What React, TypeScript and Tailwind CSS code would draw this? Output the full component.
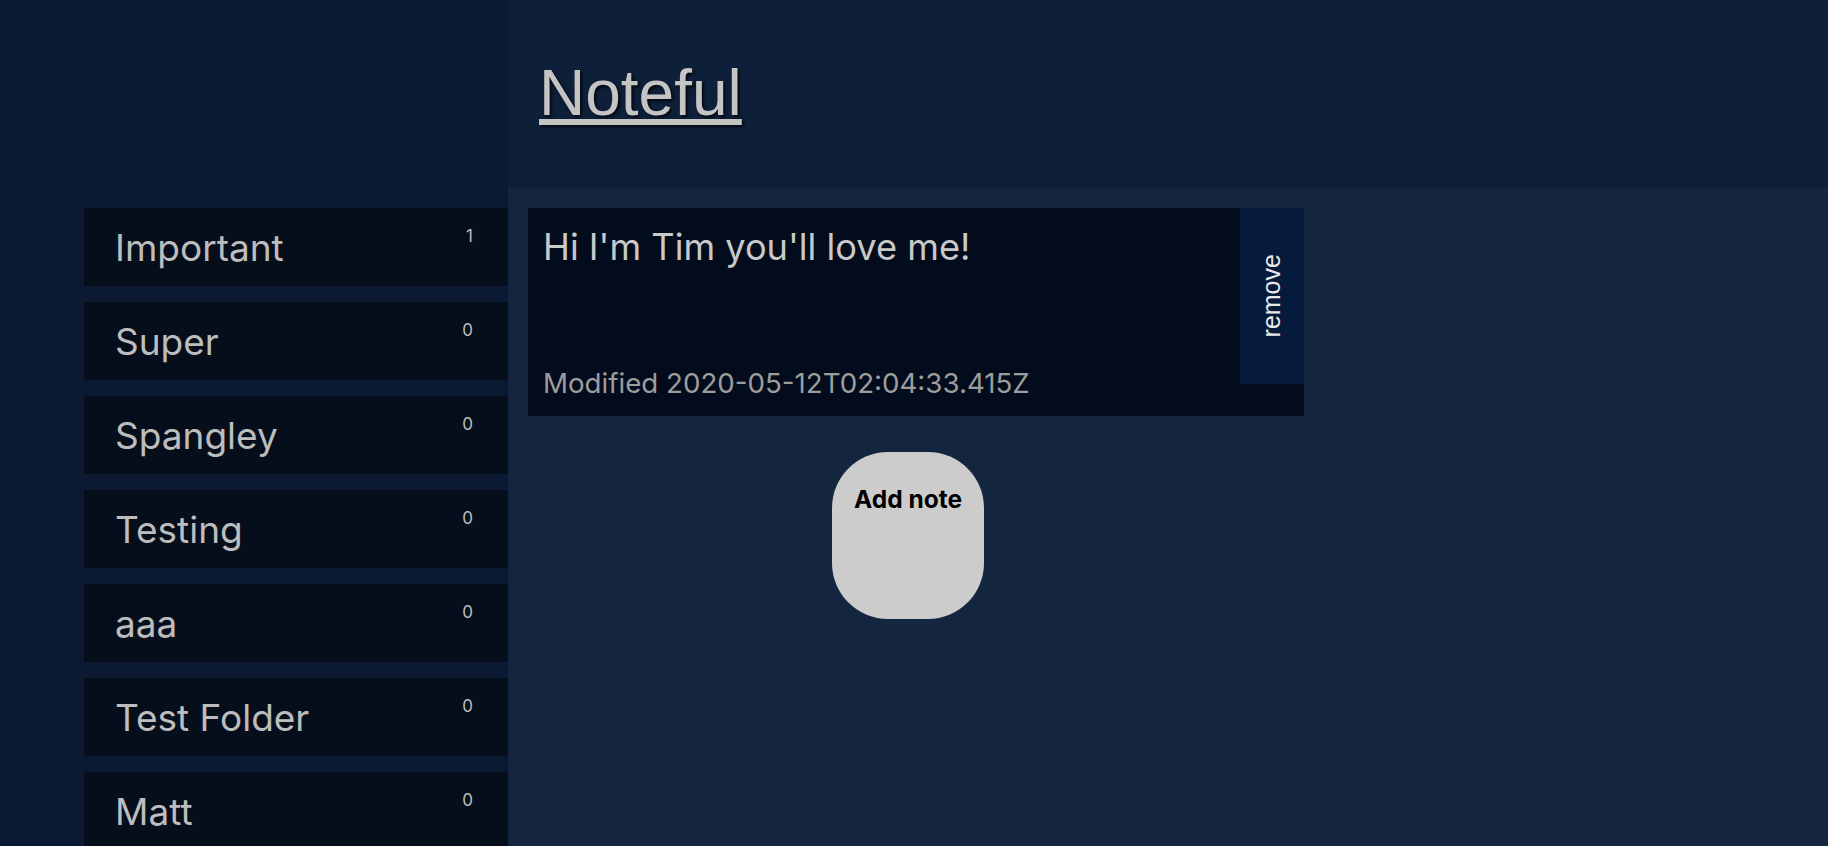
const folders = [
  { name: "Important", count: 1 },
  { name: "Super", count: 0 },
  { name: "Spangley", count: 0 },
  { name: "Testing", count: 0 },
  { name: "aaa", count: 0 },
  { name: "Test Folder", count: 0 },
  { name: "Matt", count: 0 },
];

function Sidebar() {
  return (
    <aside className="w-[508px] shrink-0 bg-[#0b1a32]">
      <div className="h-[188px]" />
      <ul className="flex flex-col gap-4 pl-[84px] pt-5">
        {folders.map((folder) => (
          <li
            key={folder.name}
            className="flex h-[78px] items-start justify-between bg-[#060e1c] pl-[31px] pr-[35px] pt-[18px] font-['Inter',sans-serif]"
          >
            <span className="text-[37px] leading-[1.21] text-[#bdbdbd]">{folder.name}</span>
            <span className="text-[17px] leading-[1.21] text-[#bdbdbd]">{folder.count}</span>
          </li>
        ))}
      </ul>
    </aside>
  );
}

function NoteCard() {
  return (
    <div className="flex h-[208px] w-[776px] bg-[#030c1d]">
      <div className="flex flex-1 flex-col justify-between pb-[15px] pl-[15px] pr-[14px] pt-[18px] font-['Inter',sans-serif]">
        <h2 className="text-[36.2px] leading-[1.21] text-[#c9c9c9]">Hi I'm Tim you'll love me!</h2>
        <p className="text-[27.7px] leading-[1.21] text-[#9d9d9d]">Modified 2020-05-12T02:04:33.415Z</p>
      </div>
      <button className="flex h-[176px] w-[64px] shrink-0 items-center justify-center bg-[#061a3b]">
        <span className="-rotate-90 whitespace-nowrap font-['Liberation_Sans',Arial,sans-serif] text-[25px] text-[#e8e8e8]">
          remove
        </span>
      </button>
    </div>
  );
}

export default function App() {
  return (
    <div className="flex h-[846px] overflow-hidden bg-[#14253f]">
      <Sidebar />
      <div className="flex flex-1 flex-col">
        <header className="flex h-[188px] shrink-0 items-center bg-[#0e1f39] pl-[31px]">
          <h1 className="font-['Liberation_Sans',Arial,sans-serif] text-[64px] leading-[1.15] text-[#c4c4c4] [text-shadow:2px_2px_3px_rgba(0,0,0,0.75)]">
            <a href="#" className="underline">
              Noteful
            </a>
          </h1>
        </header>
        <main className="flex flex-col items-start px-5 pt-5">
          <NoteCard />
          <button className="ml-[304px] mt-9 flex h-[167px] w-[152px] justify-center rounded-[56px] bg-[#cccccc] pt-[33px] font-['Inter',sans-serif] text-[24.5px] font-bold leading-[1.21] text-black">
            Add note
          </button>
        </main>
      </div>
    </div>
  );
}
